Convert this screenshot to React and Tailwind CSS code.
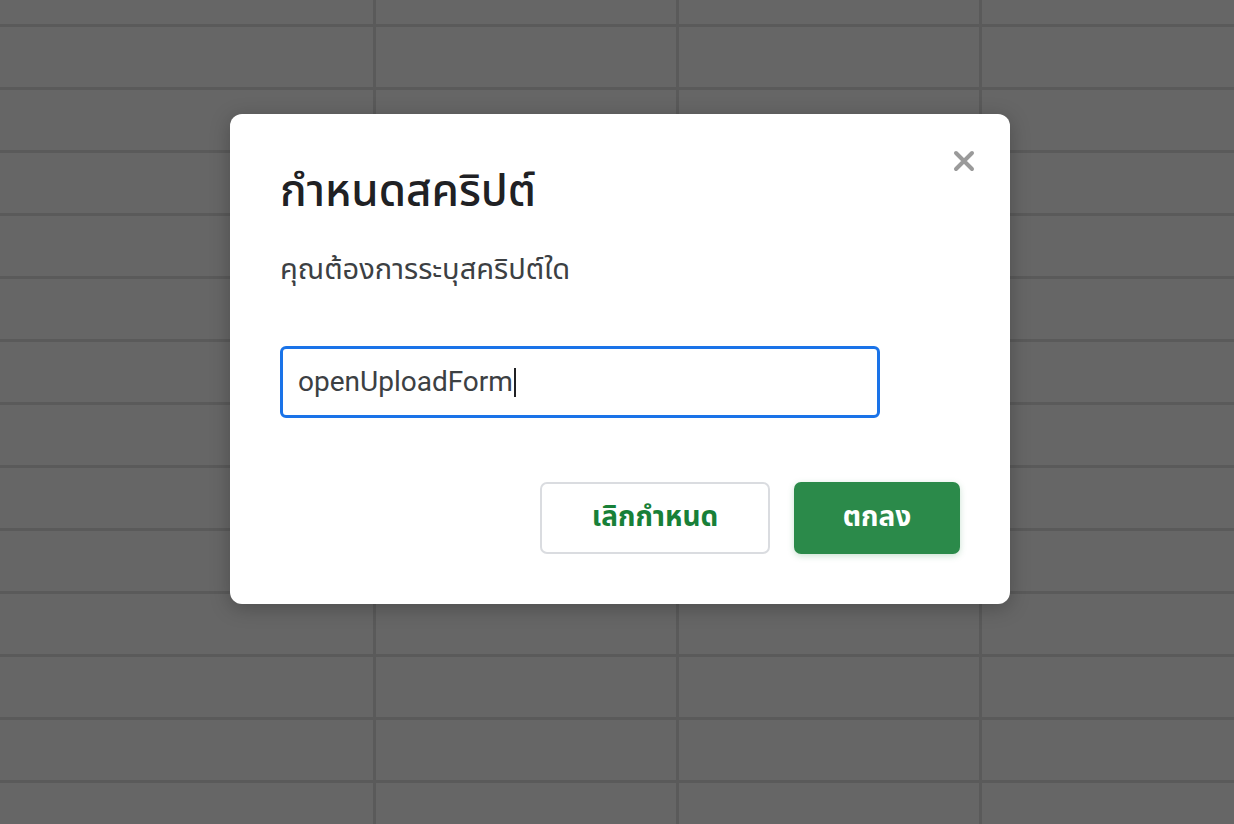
import React from 'react';

const ROWS = 14;
const COLS = 4;

function SheetBackdrop() {
  const cells = [];
  for (let r = 0; r < ROWS; r++) {
    for (let c = 0; c < COLS; c++) {
      cells.push(<div key={`${r}-${c}`} className="bg-[#666666]" />);
    }
  }
  return (
    <div className="grid grid-cols-[373px_300px_300px_1fr] grid-rows-[24px_repeat(13,60px)] gap-[3px] bg-[#5a5a5a] h-[824px] overflow-hidden">
      {cells}
    </div>
  );
}

function CloseIcon() {
  return (
    <svg width="24" height="24" viewBox="0 0 24 24" className="blur-[0.6px]">
      <path d="M4 4 L20 20 M20 4 L4 20" stroke="#9a9a9a" strokeWidth="4" strokeLinecap="round" />
    </svg>
  );
}

export default function App() {
  const thai = { fontFamily: '"Noto Sans Thai", "Noto Sans", "Loma", "Garuda", sans-serif' };

  return (
    <div className="relative w-[1234px] h-[824px] overflow-hidden">
      <SheetBackdrop />

      {/* Dialog */}
      <div className="absolute left-[230px] top-[114px] w-[780px] h-[490px] bg-white rounded-[12px] shadow-[0_4px_20px_rgba(0,0,0,0.25)] px-[50px] pt-[54px]">
        <button className="absolute right-[34px] top-[35px] flex items-center justify-center">
          <CloseIcon />
        </button>

        <h1 className="text-[44px] leading-[50px] font-medium text-[#202124]" style={thai}>
          กำหนดสคริปต์
        </h1>

        <p className="mt-[33px] text-[29px] leading-[38px] text-[#3c4043]" style={thai}>
          คุณต้องการระบุสคริปต์ใด
        </p>

        <div className="mt-[57px] w-[600px] h-[72px] border-[3px] border-[#1a73e8] rounded-[6px] flex items-center px-[15px]">
          <span
            className="text-[28px] text-[#3c4043]"
            style={{ fontFamily: 'Roboto, "Liberation Sans", sans-serif' }}
          >
            openUploadForm
          </span>
          <span className="ml-[1px] w-[2px] h-[29px] bg-[#202124]" />
        </div>

        <div className="mt-[64px] flex justify-end gap-[24px]">
          <button
            className="w-[230px] h-[72px] rounded-[7px] border-2 border-[#dadce0] bg-white text-[28px] font-bold text-[#188038]"
            style={thai}
          >
            เลิกกำหนด
          </button>
          <button
            className="w-[166px] h-[72px] rounded-[7px] bg-[#2b8a4a] text-[28px] font-bold text-white shadow-[0_2px_6px_rgba(43,138,74,0.25)]"
            style={thai}
          >
            ตกลง
          </button>
        </div>
      </div>
    </div>
  );
}
